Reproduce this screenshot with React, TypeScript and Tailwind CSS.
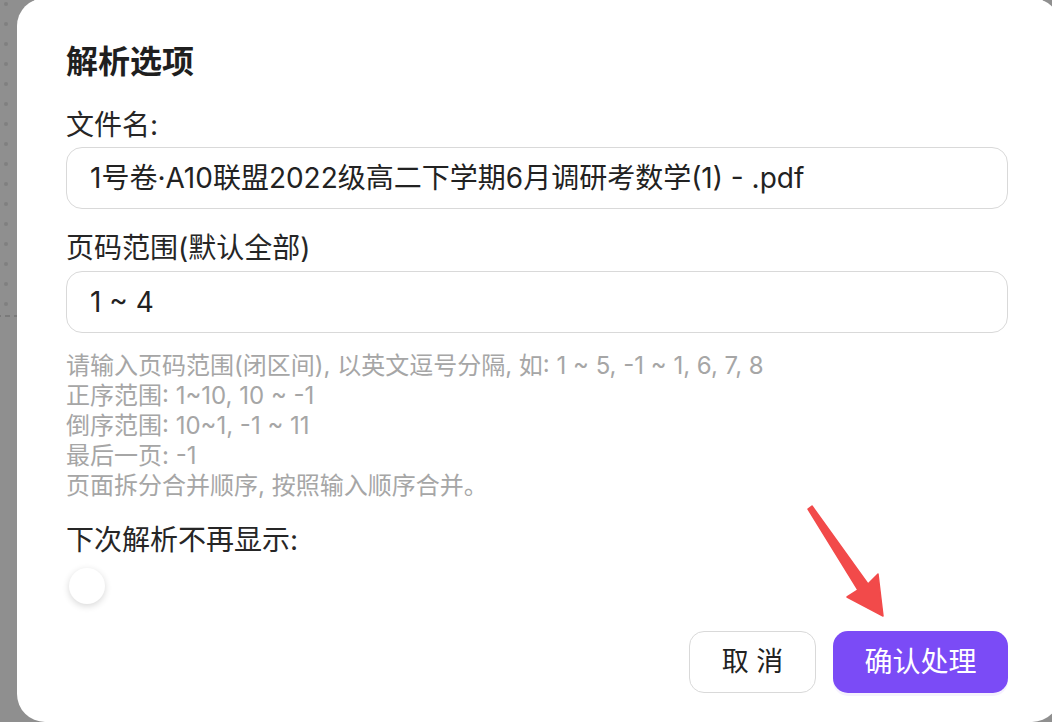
import { useState } from "react";

const helpLines = [
  "请输入页码范围(闭区间), 以英文逗号分隔, 如: 1 ~ 5, -1 ~ 1, 6, 7, 8",
  "正序范围: 1~10, 10 ~ -1",
  "倒序范围: 10~1, -1 ~ 11",
  "最后一页: -1",
  "页面拆分合并顺序, 按照输入顺序合并。",
];

const dots = Array.from({ length: 16 });

const ParseOptions = () => {
  const [hideNext, setHideNext] = useState(false);

  return (
    <div className="relative h-[722px] w-[1052px] overflow-hidden bg-[#8f8f8f] font-['Inter','Noto_Sans_CJK_SC',sans-serif]">
      <div className="flex h-full">
        {/* backdrop strip */}
        <div className="flex w-[17px] shrink-0 flex-col pt-[2px]">
          {dots.map((_, i) => (
            <div key={i} className="ml-[4px] mb-[16px] h-[4px] w-[4px] rounded-full bg-[#808080]" />
          ))}
          <div className="-mt-[7px] flex gap-[4px]">
            <div className="h-[2px] w-[1px] bg-[#7a7a7a]" />
            <div className="h-[2px] w-[6px] bg-[#7a7a7a]" />
            <div className="h-[2px] w-[3px] bg-[#7a7a7a]" />
          </div>
        </div>

        {/* dialog */}
        <div className="-mt-[2px] w-[1043px] shrink-0 rounded-[28px] bg-white pl-[49px] pr-[52px] pt-[44px] pb-[40px]">
          <h2 className="text-[32px] font-semibold leading-[40px] text-[#1f1f1f]">解析选项</h2>

          <label className="mt-[25px] block text-[28px] leading-[36px] text-[#262626]">文件名:</label>
          <div className="mt-[4px] flex h-[62px] items-center rounded-[16px] border-[1.5px] border-[#d9d9d9] px-[23px] text-[28px] text-[#222]">
            1号卷·A10联盟2022级高二下学期6月调研考数学(1) - .pdf
          </div>

          <label className="mt-[21px] block text-[28px] leading-[36px] text-[#262626]">页码范围(默认全部)</label>
          <div className="mt-[5px] flex h-[62px] items-center rounded-[16px] border-[1.5px] border-[#d9d9d9] px-[23px] text-[28px] text-[#222]">
            1 ~ 4
          </div>

          <div className="mt-[18px] text-[24px] leading-[30px] text-[#a6a6a6]">
            {helpLines.map((line) => (
              <p key={line}>{line}</p>
            ))}
          </div>

          <label className="mt-[21px] block text-[28px] leading-[36px] text-[#262626]">下次解析不再显示:</label>
          <button
            type="button"
            onClick={() => setHideNext(!hideNext)}
            className="mt-[9px] flex h-[38px] w-[76px] items-center rounded-full bg-white pl-[3px]"
          >
            <span className="h-[36px] w-[36px] rounded-full bg-white shadow-[0_2px_7px_rgba(0,0,0,0.16)]" />
          </button>

          <div className="mt-[26px] flex justify-end gap-[17px]">
            <button className="h-[62px] w-[127px] rounded-[15px] border-[1.5px] border-[#d9d9d9] bg-white text-[27px] text-[#222]">
              取 消
            </button>
            <button className="h-[62px] w-[175px] rounded-[15px] bg-[#7b4bf6] text-[28px] text-white shadow-[0_3px_0_rgba(123,75,246,0.08)]">
              确认处理
            </button>
          </div>
        </div>
      </div>

      {/* annotation arrow */}
      <svg
        className="pointer-events-none absolute left-[800px] top-[500px]"
        width="90"
        height="120"
        viewBox="0 0 90 120"
      >
        <polygon
          points="8,9 12,6 68,84 78,74 83,116 47,97 58,90"
          fill="#f24a4a"
          stroke="#f24a4a"
          strokeWidth="1.5"
          strokeLinejoin="round"
        />
      </svg>
    </div>
  );
};

export default function App() {
  return <ParseOptions />;
}
